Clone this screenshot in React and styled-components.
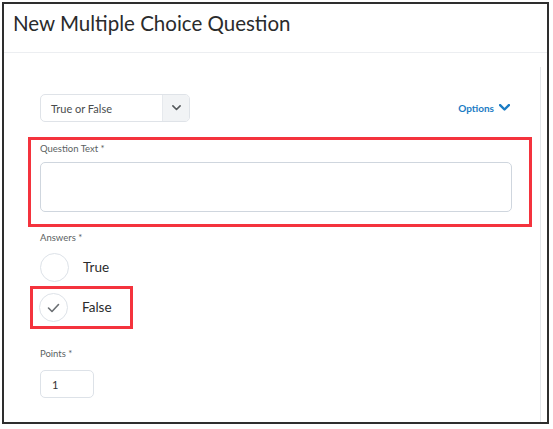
import React from 'react';
import styled, { createGlobalStyle } from 'styled-components';

const GlobalStyle = createGlobalStyle`
  html, body {
    margin: 0;
    padding: 0;
    background: #fff;
  }
  body {
    font-family: Lato, 'Noto Sans', 'Liberation Sans', sans-serif;
    color: #202122;
  }
`;

const Frame = styled.div`
  box-sizing: border-box;
  margin: 2px 0 0 2px;
  width: 547px;
  height: 422px;
  border: 2px solid #2e2e2e;
  overflow: hidden;
`;

const Header = styled.div`
  box-sizing: border-box;
  height: 49px;
  padding: 7px 0 0 9px;
  border-bottom: 1px solid #eceef1;
`;

const Title = styled.h1`
  margin: 0;
  font-size: 20.5px;
  line-height: 25px;
  font-weight: 400;
  color: #2a2b2c;
`;

const Panel = styled.div`
  box-sizing: border-box;
  margin-top: 14px;
  width: 537px;
  height: 360px;
  padding: 27px 28px 0 36px;
  border-right: 1px solid #e4e7eb;
  display: flex;
  flex-direction: column;
`;

const TopRow = styled.div`
  display: flex;
  justify-content: space-between;
  align-items: center;
  height: 28px;
`;

const Select = styled.div`
  box-sizing: border-box;
  width: 150px;
  height: 28px;
  display: flex;
  border: 1px solid #dfe3e8;
  border-radius: 5px;
  overflow: hidden;
`;

const SelectText = styled.div`
  flex: 1;
  display: flex;
  align-items: center;
  padding-left: 10px;
  font-size: 11px;
  color: #494c4e;
`;

const SelectArrow = styled.div`
  width: 26px;
  display: flex;
  align-items: center;
  justify-content: center;
  background: #f1f3f5;
  border-left: 1px solid #e6e9ed;
`;

const OptionsLink = styled.div`
  display: flex;
  align-items: center;
  gap: 5px;
  margin-right: 2px;
  font-size: 10px;
  font-weight: 700;
  color: #1a7cc4;
`;

const Highlight = styled.div`
  box-sizing: border-box;
  border: 3px solid #f4333d;
  margin: ${(p) => p.margin};
  padding: ${(p) => p.pad};
  width: ${(p) => p.w || 'auto'};
  height: ${(p) => p.h || 'auto'};
`;

const Label = styled.div`
  font-size: 9.5px;
  line-height: 14px;
  color: #5b5f62;
  margin-top: ${(p) => p.mt || 0}px;
`;

const TextArea = styled.div`
  box-sizing: border-box;
  margin-top: 6px;
  height: 50px;
  border: 1px solid #cfd6de;
  border-radius: 5px;
`;

const AnswerRow = styled.div`
  display: flex;
  align-items: center;
  gap: 14px;
  height: 29px;
  margin-top: ${(p) => p.mt || 0}px;
`;

const Circle = styled.div`
  box-sizing: border-box;
  width: 29px;
  height: 29px;
  border-radius: 50%;
  border: 1px solid #dde2e8;
  display: flex;
  align-items: center;
  justify-content: center;
  flex-shrink: 0;
`;

const AnswerText = styled.div`
  font-size: 13.5px;
  line-height: 16px;
  margin-top: -2px;
  color: #2a2b2c;
`;

const PointsInput = styled.div`
  box-sizing: border-box;
  margin-top: 9px;
  width: 54px;
  height: 28px;
  border: 1px solid #dde2e8;
  border-radius: 5px;
  display: flex;
  align-items: center;
  padding-left: 11px;
  font-size: 11px;
  color: #333;
`;

const Chevron = ({ color, w, sw }) => (
  <svg width={w} height={w * 0.65} viewBox="0 0 10 6.5">
    <polyline points="1,1 5,5 9,1" fill="none" stroke={color} strokeWidth={sw} strokeLinecap="round" strokeLinejoin="round" />
  </svg>
);

const App = () => (
  <>
    <GlobalStyle />
    <Frame>
      <Header>
        <Title>New Multiple Choice Question</Title>
      </Header>
      <Panel>
        <TopRow>
          <Select>
            <SelectText>True or False</SelectText>
            <SelectArrow>
              <Chevron color="#55595c" w={9} sw={1.8} />
            </SelectArrow>
          </Select>
          <OptionsLink>
            Options
            <Chevron color="#1a7cc4" w={11} sw={2.2} />
          </OptionsLink>
        </TopRow>

        <Highlight margin="15px -20px 0 -12px" pad="2px 17px 11px 9px" h="90px">
          <Label>Question Text *</Label>
          <TextArea />
        </Highlight>

        <Label mt={4}>Answers *</Label>
        <AnswerRow mt={8}>
          <Circle />
          <AnswerText>True</AnswerText>
        </AnswerRow>
        <Highlight margin="4px 0 0 -10px" pad="0 0 0 6px" w="103px" h="43px">
          <AnswerRow mt={4}>
            <Circle>
              <svg width="13" height="10" viewBox="0 0 13 10">
                <polyline points="1.5,5 5,8.5 11.5,1.5" fill="none" stroke="#6b6f73" strokeWidth="1.6" strokeLinecap="round" strokeLinejoin="round" />
              </svg>
            </Circle>
            <AnswerText>False</AnswerText>
          </AnswerRow>
        </Highlight>

        <Label mt={18}>Points *</Label>
        <PointsInput>1</PointsInput>
      </Panel>
    </Frame>
  </>
);

export default App;
